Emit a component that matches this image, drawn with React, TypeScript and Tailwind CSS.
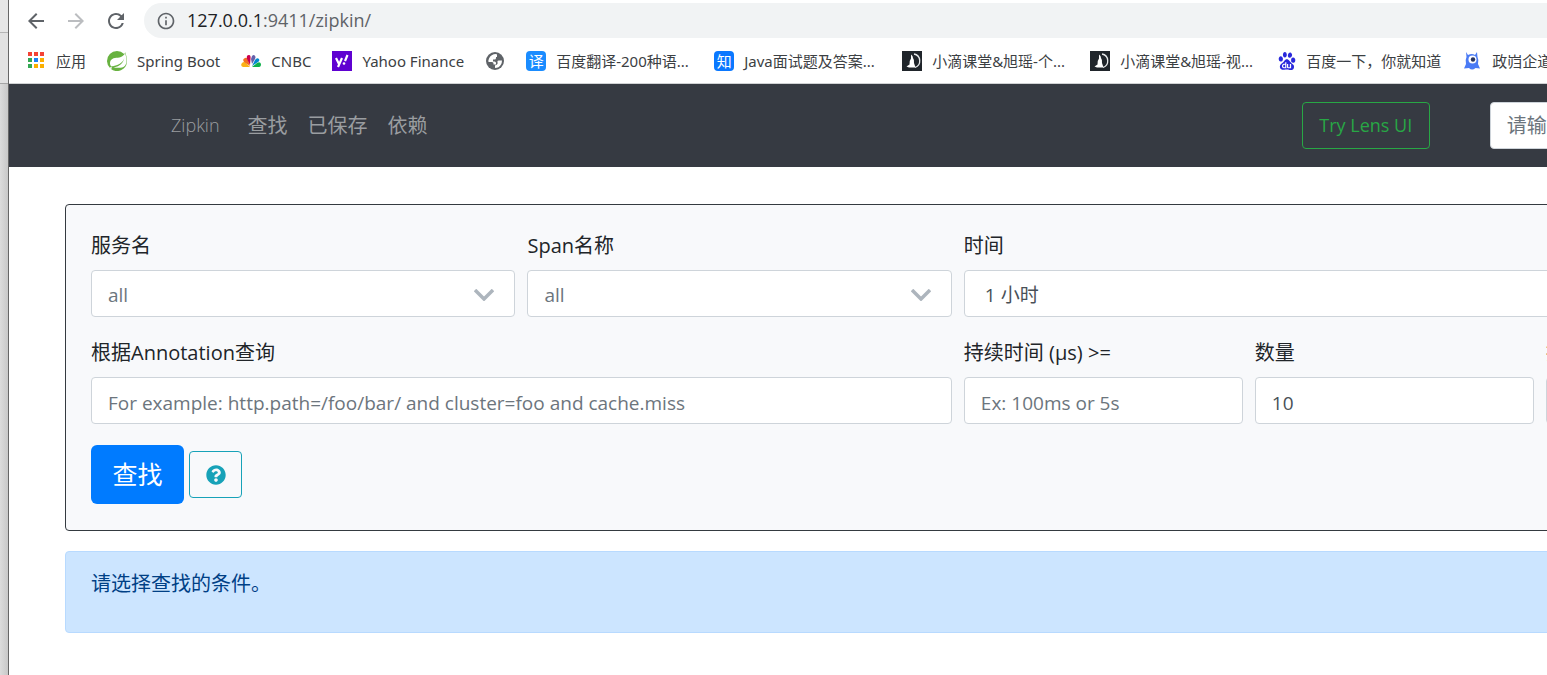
import type { ReactNode } from "react";
import { FaQuestionCircle } from "react-icons/fa";
import {
  MdArrowBack,
  MdArrowForward,
  MdInfoOutline,
  MdRefresh,
} from "react-icons/md";
import { SiBaidu, SiSpring } from "react-icons/si";

interface Bookmark {
  title: string;
  icon: ReactNode;
  label?: string;
}

const appColors = [
  "fill-[#f44336]",
  "fill-[#f44336]",
  "fill-[#f44336]",
  "fill-[#34a853]",
  "fill-[#1a82f7]",
  "fill-[#fbaf00]",
  "fill-[#34a853]",
  "fill-[#fbaf00]",
  "fill-[#fbaf00]",
];

function AppsIcon() {
  return (
    <svg viewBox="0 0 20 20" className="size-5">
      {appColors.map((color, i) => (
        <rect
          key={i}
          x={2 + (i % 3) * 6}
          y={1 + Math.floor(i / 3) * 6}
          width="4"
          height="4"
          className={color}
        />
      ))}
    </svg>
  );
}

function PeacockIcon() {
  return (
    <svg viewBox="0 0 20 20" className="size-5">
      <path d="M9 16H2Q-1 15 1 12Q3 10 5 12Z" fill="#fbb216" />
      <path d="M9 15 3 11Q1 8 4 7Q6 6 7 9Z" fill="#f37021" />
      <path d="M9 14 6 8Q5 4 8 4Q10 4 9.500 8Z" fill="#cc004c" />
      <path d="M11 13 10 8 11 5Q13 3 14 5Q15 6 14 8Z" fill="#6460aa" />
      <path d="M11 15 14 9Q16 6 18 8Q19 10 17 11Z" fill="#0089d0" />
      <path d="M11 16 16 12Q19 10 20 13Q20 16 18 16Z" fill="#0db14b" />
    </svg>
  );
}

function YahooIcon() {
  return (
    <svg viewBox="0 0 20 20" className="size-5">
      <rect width="20" height="20" fill="#5f01d1" />
      <path
        d="M4 7l3 6M10 7l-4 9M15.500 4l-2.500 6"
        fill="none"
        stroke="#fff"
        strokeWidth="2.200"
      />
      <circle cx="12" cy="12.500" r="1.300" fill="#fff" />
    </svg>
  );
}

function GlobeIcon() {
  return (
    <svg viewBox="0 0 20 20" className="size-5">
      <circle cx="10" cy="10" r="9" fill="#5f6368" />
      <path
        d="M11 3Q6 3 4 7.500Q3 9.500 3.500 11H7Q8.500 11 8.500 12.500V13.500H11V12Q11 10.500 9.500 10.500H8V8.500H9.500Q11 8.500 11 7V6H12V3.500Z"
        fill="#fff"
      />
      <path
        d="M17 9.500H13.500Q12 9.500 12.500 11Q13 12.500 12 13.500Q11 14 10 14.500V17Q14 17 16 13.500Q17 11.500 17 9.500Z"
        fill="#fff"
      />
    </svg>
  );
}

function MoonIcon() {
  return (
    <svg viewBox="0 0 20 20" className="size-5">
      <rect width="20" height="20" fill="#20252b" />
      <path
        d="M12 3a7 7 0 0 1 1 13.500"
        fill="none"
        stroke="#e8eaec"
        strokeWidth="1.300"
      />
      <path
        d="M9 3.500Q11 4.500 11 7Q12.500 9 12 12L13.500 16.500H7L4.500 15.500 7.500 13.500Q7 10 9 7.500Z"
        fill="#fff"
      />
    </svg>
  );
}

function MonsterIcon() {
  return (
    <svg viewBox="0 0 20 20" className="size-5">
      <path
        d="M4 1 6 4Q10 2 13 4L15 1 15.500 6Q17 9 16 13L18 17.500 13.500 17Q10 20 7 17L2 17.500 4 13Q3 9 4.500 6Z"
        fill="#4a7bf5"
      />
      <circle cx="10.500" cy="8.500" r="4" fill="#fff" />
      <circle cx="11" cy="8.500" r="2.200" fill="#27325c" />
    </svg>
  );
}

const bookmarks: Bookmark[] = [
  { title: "应用", icon: <AppsIcon /> },
  { title: "Spring Boot", icon: <SiSpring className="size-5 text-[#68b240]" /> },
  { title: "CNBC", icon: <PeacockIcon /> },
  { title: "Yahoo Finance", icon: <YahooIcon /> },
  { title: "", label: "未命名书签", icon: <GlobeIcon /> },
  {
    title: "百度翻译-200种语...",
    icon: (
      <span className="flex size-5 items-center justify-center rounded-sm bg-[#1a8cff] text-[15px] text-white">
        译
      </span>
    ),
  },
  {
    title: "Java面试题及答案...",
    icon: (
      <span className="flex size-5 items-center justify-center rounded-sm bg-[#0a78ff] text-[15px] text-white">
        知
      </span>
    ),
  },
  { title: "小滴课堂&旭瑶-个...", icon: <MoonIcon /> },
  { title: "小滴课堂&旭瑶-视...", icon: <MoonIcon /> },
  {
    title: "百度一下，你就知道",
    icon: <SiBaidu className="size-[18px] text-[#2a29dc]" />,
  },
  { title: "政岿企道", icon: <MonsterIcon /> },
];

const navLinks = ["查找", "已保存", "依赖"];

const controlClass =
  "block h-[47px] w-full appearance-none rounded border border-[#ced4da] bg-white pt-1 text-[19px] placeholder:text-[#6c757d] placeholder:opacity-100";

function Field({
  id,
  label,
  className,
  children,
}: {
  id: string;
  label: string;
  className: string;
  children: ReactNode;
}) {
  return (
    <div className={className}>
      <label htmlFor={id} className="mb-2 block h-8 whitespace-nowrap text-[20px] leading-8">
        {label}
      </label>
      {children}
    </div>
  );
}

function SearchSelect({ id }: { id: string }) {
  return (
    <div className="relative">
      <select id={id} className={`${controlClass} px-4 text-[#6c757d]`}>
        <option>all</option>
      </select>
      <svg
        viewBox="0 0 20 12"
        className="pointer-events-none absolute top-[19px] right-[21px] h-3 w-5"
      >
        <path d="M1 1l9 9 9-9" fill="none" stroke="#adb5bd" strokeWidth="3.500" />
      </svg>
    </div>
  );
}

function BrowserBar() {
  return (
    <header className="border-b border-[#d0d2d4] bg-white">
      <div className="flex h-[41px] items-center pl-[15px] text-[#5f6368]">
        <button aria-label="后退" className="mr-4">
          <MdArrowBack className="size-6" />
        </button>
        <button aria-label="前进" className="mr-4 text-[#bbbdc0]">
          <MdArrowForward className="size-6" />
        </button>
        <button aria-label="刷新" className="mr-4">
          <MdRefresh className="size-6" />
        </button>
        <div className="flex h-[35px] flex-1 items-center rounded-l-full bg-[#f1f3f4] pl-3">
          <MdInfoOutline className="mr-[11px] size-5" />
          <p className="text-[18px]">
            <span className="text-[#202124]">127.0.0.1</span>:9411/zipkin/
          </p>
        </div>
      </div>
      <nav className="flex h-[42px] items-center gap-[21px] overflow-hidden pb-0.5 pl-[17px] font-['Noto_Sans','Noto_Sans_CJK_SC',sans-serif] text-[15px] text-[#3c4043]">
        {bookmarks.map((bookmark) => (
          <a
            key={bookmark.title}
            href="#"
            aria-label={bookmark.label}
            className="flex shrink-0 items-center gap-2.5 whitespace-nowrap"
          >
            {bookmark.icon}
            {bookmark.title && (
              <span className={bookmark.title.endsWith("...") ? "min-w-[137px]" : ""}>
                {bookmark.title}
              </span>
            )}
          </a>
        ))}
      </nav>
    </header>
  );
}

function Navbar() {
  return (
    <nav className="flex h-[83px] items-center bg-[#363a42] pr-[163px] pl-[162px] text-[20px] text-[#9a9da0]">
      <a href="#" className="mr-7 text-[18px] font-light">
        Zipkin
      </a>
      <div className="flex gap-5">
        {navLinks.map((link) => (
          <a key={link} href="#">
            {link}
          </a>
        ))}
      </div>
      <button className="mr-15 ml-auto h-[47px] w-32 rounded border border-[#28a745] text-[18px] text-[#28a745]">
        Try Lens UI
      </button>
      <input
        type="text"
        aria-label="Trace ID"
        placeholder="请输入trace id"
        className="h-[47px] w-62 rounded border border-[#ced4da] bg-white px-4 placeholder:text-[#6c757d]"
      />
    </nav>
  );
}

function SearchForm() {
  return (
    <form className="rounded border border-[#343a40] bg-[#f8f9fb] px-[25px] pt-[25px] pb-[26px]">
      <div className="grid grid-cols-12 gap-x-3 gap-y-5">
        <Field id="service" label="服务名" className="col-span-3">
          <SearchSelect id="service" />
        </Field>
        <Field id="span" label="Span名称" className="col-span-3">
          <SearchSelect id="span" />
        </Field>
        <Field id="lookback" label="时间" className="col-span-6">
          <select id="lookback" className={`${controlClass} px-5 text-[#495057]`}>
            <option>1 小时</option>
          </select>
        </Field>
        <Field id="annotation" label="根据Annotation查询" className="col-span-6">
          <input
            id="annotation"
            type="text"
            placeholder="For example: http.path=/foo/bar/ and cluster=foo and cache.miss"
            className={`${controlClass} px-4 text-[#495057]`}
          />
        </Field>
        <Field id="duration" label="持续时间 (μs) >=" className="col-span-2">
          <input
            id="duration"
            type="text"
            placeholder="Ex: 100ms or 5s"
            className={`${controlClass} px-4 text-[#495057]`}
          />
        </Field>
        <Field id="limit" label="数量" className="col-span-2">
          <input
            id="limit"
            type="text"
            defaultValue="10"
            className={`${controlClass} px-4 text-[#495057]`}
          />
        </Field>
        <Field id="sort" label="排序" className="col-span-2">
          <select id="sort" className={`${controlClass} px-4 text-[#495057]`}>
            <option>耗时降序</option>
          </select>
        </Field>
      </div>
      <div className="mt-[21px] flex items-center gap-[5px]">
        <button
          type="button"
          className="h-[59px] w-[93px] rounded-md bg-[#007bff] text-[25px] text-white"
        >
          查找
        </button>
        <button
          type="button"
          aria-label="帮助"
          className="flex h-[47px] w-[53px] items-center justify-center rounded border border-[#17a2b8] text-[#17a2b8]"
        >
          <FaQuestionCircle className="size-5" />
        </button>
      </div>
    </form>
  );
}

export default function App() {
  return (
    <div className="flex min-h-screen bg-white font-['Open_Sans','Noto_Sans_CJK_SC',sans-serif] text-[#212529]">
      {/* Edge of the window behind */}
      <div className="flex w-[9px] shrink-0 flex-col border-r border-[#666666] bg-linear-to-r from-[#dcdcdc] to-[#c8c8c8]">
        <div className="h-[33px] border-b border-[#b5b5b5] bg-[#e6e6e6]" />
        <div className="h-[51px] border-b border-[#a5a5a5] bg-[#e2e2e2]" />
      </div>

      <div className="min-w-0 flex-1 overflow-hidden">
        <BrowserBar />
        {/* The page is wider than the window and runs off its right edge */}
        <div className="w-[123%]">
          <Navbar />
          <main className="flex flex-col gap-5 pt-[37px] pr-[50px] pb-10 pl-14">
            <SearchForm />
            <div className="h-[82px] rounded border border-[#b8daff] bg-[#cce5ff] px-[25px] py-4 text-[20px] leading-8 text-[#004085]">
              请选择查找的条件。
            </div>
          </main>
        </div>
      </div>
    </div>
  );
}
